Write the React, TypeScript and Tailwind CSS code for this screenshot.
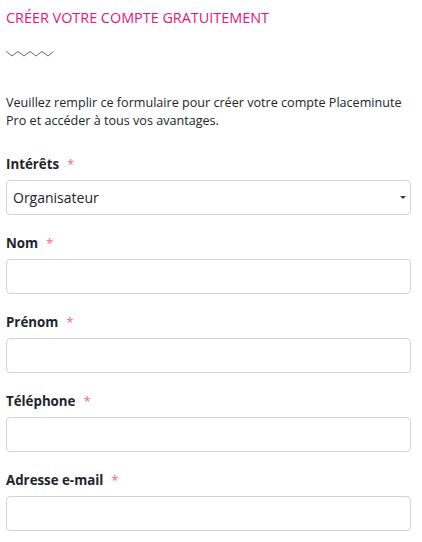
import React from "react";

const fields = ["Nom", "Prénom", "Téléphone", "Adresse e-mail"];

function Label({ text }: { text: string }) {
  return (
    <div className="flex items-center text-[13.3px] font-bold text-[#212529] leading-5 mb-[6px]">
      {text}
      <span className="ml-[8px] text-[#f26b7a] font-normal">*</span>
    </div>
  );
}

export default function App() {
  return (
    <div
      className="min-h-[542px] bg-white pl-[6px] pr-[11px] pt-[8px]"
      style={{ fontFamily: '"Open Sans", "Noto Sans", sans-serif' }}
    >
      <h1 className="text-[14.4px] font-normal text-[#e3157f] leading-5 m-0">CRÉER VOTRE COMPTE GRATUITEMENT</h1>
      <svg width="48" height="8" viewBox="0 0 48 8" className="mt-[22px] block" fill="none" stroke="#555" strokeWidth="0.9">
        <polyline points="0.5,1.5 6,6 12,1.5 18,6 24,1.5 30,6 36,1.5 42,6 47.5,1.5" />
      </svg>
      <p className="mt-[36px] mb-0 text-[12.6px] leading-[18px] text-[#212529]">
        Veuillez remplir ce formulaire pour créer votre compte Placeminute Pro et accéder à tous vos avantages.
      </p>
      <div className="mt-[24px]">
        <Label text="Intérêts" />
        <div className="h-[35px] border border-[#ced4da] rounded-[4px] flex items-center justify-between pl-[6px] pr-[3px] text-[14px] text-[#212529]">
          <span>Organisateur</span>
          <svg width="6" height="4" viewBox="0 0 6 4" className="mr-[1px]"><polygon points="0,0 6,0 3,3" fill="#343a40" /></svg>
        </div>
      </div>
      {fields.map((f) => (
        <div key={f} className="mt-[18px]">
          <Label text={f} />
          <div className="h-[35px] border border-[#ced4da] rounded-[4px] bg-white" />
        </div>
      ))}
    </div>
  );
}
